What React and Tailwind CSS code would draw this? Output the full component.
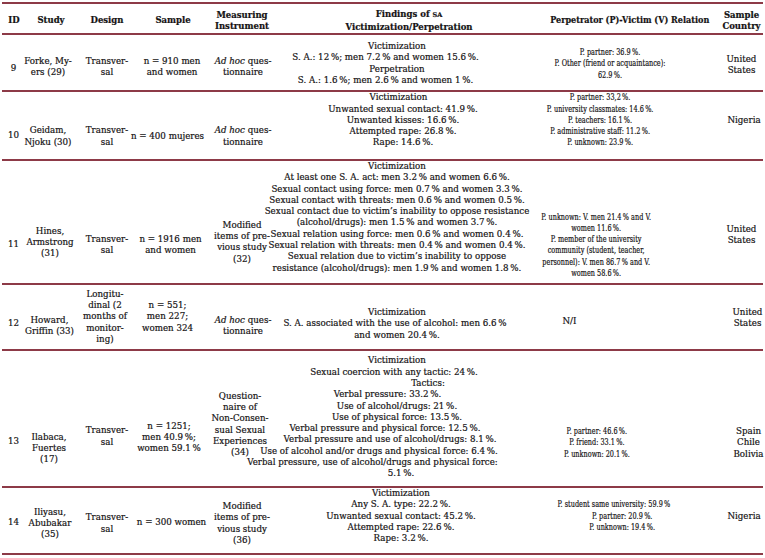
import React from 'react';

const cols = 'grid grid-cols-[20px_58px_54px_73px_63px_278px_172px_43px]';
const rule = 'border-b-2 border-[#8d3a47]';
const P = '\u2009%';
const narrow = 'scale-x-[0.75]';

const adHoc = <><i>Ad hoc</i> ques-</>;

const header = [
  { lines: ['ID'], cls: 'pl-[4px]' },
  { lines: ['Study'] },
  { lines: ['Design'] },
  { lines: ['Sample'], cls: 'pl-[5px]' },
  { lines: ['Measuring', 'Instrument'], cls: 'pl-[7px]' },
  { lines: [<>Findings of <span className="text-[6.5px]">SA</span></>, 'Victimization/Perpetration'] },
  { lines: ['Perpetrator (P)-Victim (V) Relation'], cls: 'pr-[8px]', inner: 'scale-x-[0.95]' },
  { lines: ['Sample', 'Country'] },
];

const rows = [
  {
    h: 'h-[57px]',
    cells: [
      { lines: ['9'], cls: 'pt-[13px] pl-[3px]' },
      { lines: ['Forke, My-', 'ers (29)'], cls: 'pt-[9px] pr-[6px]' },
      { lines: ['Transver-', 'sal'], cls: 'pt-[9px]' },
      { lines: ['n = 910 men', 'and women'], cls: 'pt-[9px] pl-[3px]' },
      { lines: [adHoc, 'tionnaire'], cls: 'pt-[9px] pl-[9px]' },
      {
        lines: [
          'Victimization',
          { t: `S. A.: 12${P}; men 7.2${P} and women 15.6${P}.`, cls: 'mr-[23px]' },
          'Perpetration',
          { t: `S. A.: 1.6${P}; men 2.6${P} and women 1${P}.`, cls: 'mr-[23px]' },
        ],
        cls: 'pt-[2px] pr-[24px]',
      },
      { lines: [`P. partner: 36.9${P}.`, 'P. Other (friend or acquaintance):', `62.9${P}.`], cls: 'pt-[3px] pr-[48px]', inner: narrow },
      { lines: ['United', 'States'], cls: 'pt-[5px]' },
    ],
  },
  {
    h: 'h-[69px]',
    cells: [
      { lines: ['10'], cls: 'pt-[21px] pl-[3px]' },
      { lines: ['Geidam,', 'Njoku (30)'], cls: 'pt-[22px] pr-[6px]' },
      { lines: ['Transver-', 'sal'], cls: 'pt-[22px]' },
      { lines: ['n = 400 mujeres'], cls: 'pt-[22px] pr-[6px]' },
      { lines: [adHoc, 'tionnaire'], cls: 'pt-[22px] pl-[9px]' },
      {
        lines: [
          { t: 'Victimization', cls: 'mr-[9px]' },
          `Unwanted sexual contact: 41.9${P}.`,
          `Unwanted kisses: 16.6${P}.`,
          `Attempted rape: 26.8${P}.`,
          `Rape: 14.6${P}.`,
        ],
        cls: 'pb-[10px] pr-[12px]',
      },
      {
        lines: [
          `P. partner: 33,2${P}.`,
          `P. university classmates: 14.6${P}.`,
          `P. teachers: 16.1${P}.`,
          `P. administrative staff: 11.2${P}.`,
          `P. unknown: 23.9${P}.`,
        ],
        cls: 'pb-[10px] pr-[67px]',
        inner: narrow,
      },
      { lines: ['Nigeria'], cls: 'pb-[9px] pl-[5px]' },
    ],
  },
  {
    h: 'h-[124px]',
    cells: [
      { lines: ['11'], cls: 'pt-[38px] pl-[3px]' },
      { lines: ['Hines,', 'Armstrong', '(31)'], cls: 'pt-[34px] pr-[2px]' },
      { lines: ['Transver-', 'sal'], cls: 'pt-[39px]' },
      { lines: ['n = 1916 men', 'and women'], cls: 'pt-[39px]' },
      { lines: ['Modified', 'items of pre-', 'vious study', '(32)'], cls: 'pt-[34px] pl-[7px]' },
      {
        lines: [
          'Victimization',
          `At least one S. A. act: men 3.2${P} and women 6.6${P}.`,
          `Sexual contact using force: men 0.7${P} and women 3.3${P}.`,
          `Sexual contact with threats: men 0.6${P} and women 0.5${P}.`,
          'Sexual contact due to victim’s inability to oppose resistance',
          `(alcohol/drugs): men 1.5${P} and women 3.7${P}.`,
          `Sexual relation using force: men 0.6${P} and women 0.4${P}.`,
          `Sexual relation with threats: men 0.4${P} and women 0.4${P}.`,
          'Sexual relation due to victim’s inability to oppose',
          `resistance (alcohol/drugs): men 1.9${P} and women 1.8${P}.`,
        ],
        cls: 'pb-[16px] pr-[24px]',
      },
      {
        lines: [
          `P. unknown: V. men 21.4${P} and V.`,
          `women 11.6${P}.`,
          'P. member of the university',
          'community (student, teacher,',
          `personnel): V. men 86.7${P} and V.`,
          `women 58.6${P}.`,
        ],
        cls: 'pt-[40px] pr-[75px]',
        inner: narrow,
      },
      { lines: ['United', 'States'], cls: 'pt-[20px]' },
    ],
  },
  {
    h: 'h-[66px]',
    cells: [
      { lines: ['12'], cls: 'pt-[14px] pl-[3px]' },
      { lines: ['Howard,', 'Griffin (33)'], cls: 'pt-[18px] pr-[3px]' },
      { lines: ['Longitu-', 'dinal (2', 'months of', 'monitor-', 'ing)'], cls: 'pr-[4px]' },
      { lines: ['n = 551;', 'men 227;', 'women 324'], cls: 'pr-[6px]' },
      { lines: [adHoc, 'tionnaire'], cls: 'pt-[18px] pl-[9px]' },
      {
        lines: [
          'Victimization',
          { t: `S. A. associated with the use of alcohol: men 6.6${P}`, cls: 'mr-[4px]' },
          `and women 20.4${P}.`,
        ],
        cls: 'pt-[14px] pr-[24px]',
      },
      { lines: ['N/I'], cls: 'pt-[10px] pr-[129px]' },
      { lines: ['United', 'States'], cls: 'pt-[2px] pl-[12px]' },
    ],
  },
  {
    h: 'h-[137px]',
    cells: [
      { lines: ['13'], cls: 'pt-[47px] pl-[3px]' },
      { lines: ['Ilabaca,', 'Fuertes', '(17)'], cls: 'pt-[60px] pr-[4px]' },
      { lines: ['Transver-', 'sal'], cls: 'pt-[36px]' },
      { lines: ['n = 1251;', `men 40.9${P};`, `women 59.1${P}`], cls: 'pt-[38px] pr-[3px]' },
      { lines: ['Question-', 'naire of', 'Non-Consen-', 'sual Sexual', 'Experiences', '(34)'], cls: 'pt-[12px] pl-[3px]' },
      {
        lines: [
          'Victimization',
          { t: `Sexual coercion with any tactic: 24${P}.`, cls: 'mr-[6px]' },
          { t: 'Tactics:', cls: 'ml-[62px]' },
          { t: `Verbal pressure: 33.2${P}.`, cls: 'mr-[19px]' },
          `Use of alcohol/drugs: 21${P}.`,
          `Use of physical force: 13.5${P}.`,
          { t: `Verbal pressure and physical force: 12.5${P}.`, cls: 'mr-[24px]' },
          { t: `Verbal pressure and use of alcohol/drugs: 8.1${P}.`, cls: 'mr-[14px]' },
          { t: `Use of alcohol and/or drugs and physical force: 6.4${P}.`, cls: 'mr-[36px]' },
          { t: 'Verbal pressure, use of alcohol/drugs and physical force:', cls: 'mr-[49px]' },
          { t: `5.1${P}.`, cls: 'ml-[8px]' },
        ],
        cls: 'pb-[2px] pr-[24px]',
      },
      { lines: [`P. partner: 46.6${P}.`, `P. friend: 33.1${P}.`, `P. unknown: 20.1${P}.`], cls: 'pt-[49px] pr-[74px]', inner: narrow },
      { lines: ['Spain', 'Chile', 'Bolivia'], cls: 'pt-[49px] pl-[14px]' },
    ],
  },
  {
    h: 'h-[67px]',
    cells: [
      { lines: ['14'], cls: 'pl-[3px]' },
      { lines: ['Iliyasu,', 'Abubakar', '(35)'], cls: 'pt-[2px] pr-[2px]' },
      { lines: ['Transver-', 'sal'], cls: 'pt-[2px]' },
      { lines: ['n = 300 women'], cls: 'pl-[2px]' },
      { lines: ['Modified', 'items of pre-', 'vious study', '(36)'], cls: 'pt-[2px] pl-[7px]' },
      {
        lines: [
          'Victimization',
          `Any S. A. type: 22.2${P}.`,
          `Unwanted sexual contact: 45.2${P}.`,
          `Attempted rape: 22.6${P}.`,
          `Rape: 3.2${P}.`,
        ],
        cls: 'pb-[13px] pr-[16px]',
      },
      {
        lines: [
          { t: `P. student same university: 59.9${P}`, cls: 'mr-[22px]' },
          `P. partner: 20.9${P}.`,
          `P. unknown: 19.4${P}.`,
        ],
        cls: 'pb-[13px] pr-[24px]',
        inner: narrow,
      },
      { lines: ['Nigeria'], cls: 'pb-[13px] pl-[5px]' },
    ],
  },
];

function Cell({ c, base }) {
  return (
    <div className={`flex flex-col items-center justify-center text-center whitespace-nowrap ${base || ''} ${c.cls || ''}`}>
      <div className={`flex flex-col items-center ${c.inner || ''}`}>
        {c.lines.map((l, i) =>
          l && l.t !== undefined ? (
            <div key={i} className={l.cls}>{l.t}</div>
          ) : (
            <div key={i}>{l}</div>
          )
        )}
      </div>
    </div>
  );
}

export default function App() {
  return (
    <div className="w-[765px] h-[558px] overflow-hidden bg-white text-[#141213] text-[8.7px] leading-[11.3px] font-['DejaVu_Serif',serif] [-webkit-text-stroke:0.2px]">
      <div className="mt-[2px] ml-[2px] w-[761px] border-t-2 border-[#8d3a47]">
        <div className={`${cols} ${rule} h-[31px] font-bold text-[8.5px]`}>
          {header.map((c, i) => (
            <Cell key={i} c={c} base="pt-[5px]" />
          ))}
        </div>
        {rows.map((r, i) => (
          <div key={i} className={`${cols} ${rule} ${r.h}`}>
            {r.cells.map((c, j) => (
              <Cell key={j} c={c} />
            ))}
          </div>
        ))}
      </div>
    </div>
  );
}
